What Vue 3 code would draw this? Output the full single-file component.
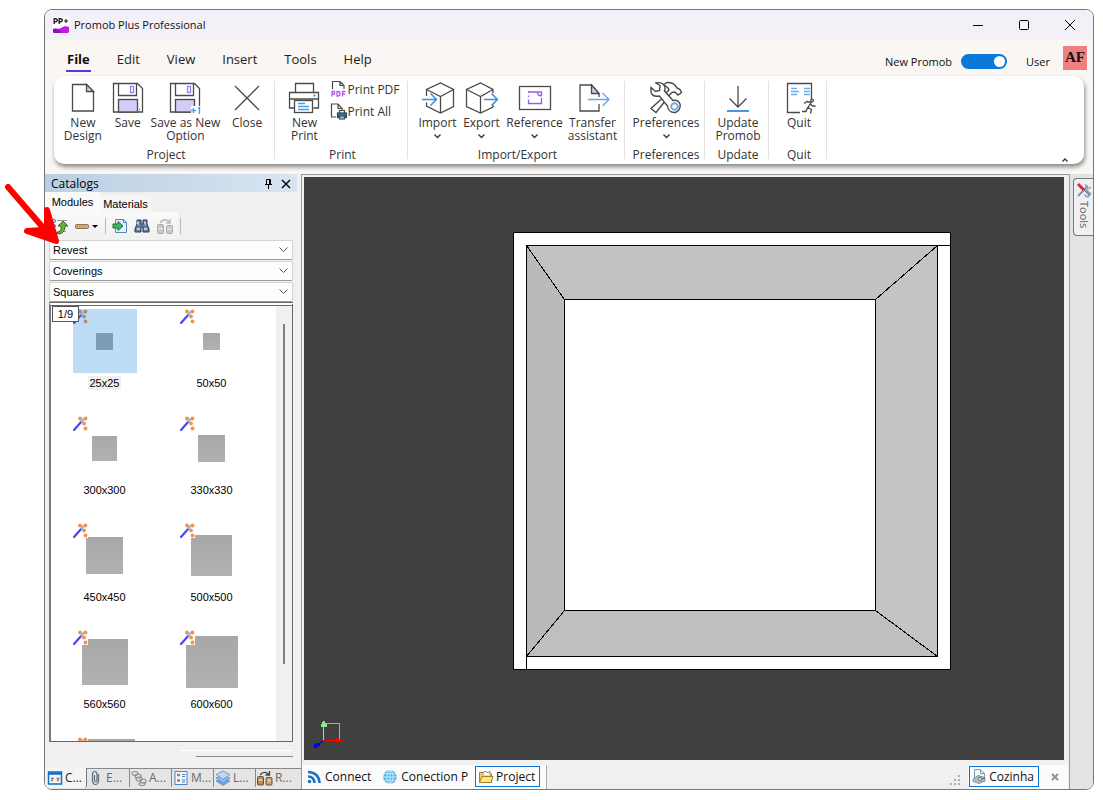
<script setup>
import { ref } from 'vue'

const menus = ['File', 'Edit', 'View', 'Insert', 'Tools', 'Help']
const activeMenu = ref('File')
const newPromob = ref(true)

const groups = [
  { name: 'Project', cls: 'g-project', items: [
    { icon: 'new', text: 'New Design', w: 'w44' },
    { icon: 'save', text: 'Save', w: 'w46' },
    { icon: 'saveas', text: 'Save as New Option', w: 'w70' },
    { icon: 'close', text: 'Close', w: 'w54' }
  ] },
  { name: 'Print', cls: 'g-print', items: [{ icon: 'print', text: 'New Print', w: 'w44' }], side: true },
  { name: 'Import/Export', cls: 'g-io', items: [
    { icon: 'import', text: 'Import', w: 'w44', drop: true },
    { icon: 'export', text: 'Export', w: 'w44', drop: true },
    { icon: 'reference', text: 'Reference', w: 'w62', drop: true },
    { icon: 'transfer', text: 'Transfer assistant', w: 'w54' }
  ] },
  { name: 'Preferences', cls: 'g-pref', items: [{ icon: 'prefs', text: 'Preferences', w: 'w70', drop: true }] },
  { name: 'Update', cls: 'g-update', items: [{ icon: 'update', text: 'Update Promob', w: 'w54' }] },
  { name: 'Quit', cls: 'g-quit', items: [{ icon: 'quit', text: 'Quit', w: 'w54' }] }
]

const combos = ['Revest', 'Coverings', 'Squares']
const modules = [
  { name: '25x25', size: 17 },
  { name: '50x50', size: 17 },
  { name: '300x300', size: 25 },
  { name: '330x330', size: 27 },
  { name: '450x450', size: 37 },
  { name: '500x500', size: 41 },
  { name: '560x560', size: 46 },
  { name: '600x600', size: 52 },
  { name: '', size: 61 }
]
const selected = ref('25x25')

const dockTabs = [
  { icon: 'catalog', text: 'C...' },
  { icon: 'clip', text: 'E...' },
  { icon: 'chain', text: 'A...' },
  { icon: 'list', text: 'M...' },
  { icon: 'layers', text: 'L...' },
  { icon: 'replace', text: 'R...' }
]
</script>

<template>
  <div class="desktop">
    <div class="window">
      <header class="titlebar">
        <svg class="logo" width="16" height="16" viewBox="0 0 16 16">
          <rect width="16" height="16" rx="1" fill="#fff" />
          <path d="M1.2 7V1.8h1.6a1.4 1.4 0 0 1 0 3H1.2M6.2 7V1.8h1.6a1.4 1.4 0 0 1 0 3H6.2" fill="none" stroke="#222" stroke-width="1.4" />
          <path d="M11 4h4M13 2v4" stroke="#222" stroke-width="1.2" />
          <path d="M0 12c3-2 5 1 8-1s5-2 8-1v4.500q0 1.500-1.500 1.500h-13q-1.500 0-1.500-1.500z" fill="#c21be8" />
          <path d="M0 12.500c3-1.500 5 1 8 1.500v2H1.500Q0 16 0 14.500z" fill="#8a0fb5" />
        </svg>
        <h1>Promob Plus Professional</h1>
        <button class="winbtn" aria-label="Minimize"><svg width="12" height="12"><path d="M1 6.500h10" stroke="#000" /></svg></button>
        <button class="winbtn" aria-label="Maximize"><svg width="12" height="12"><rect x="1.500" y="1.500" width="9" height="9" rx="1" fill="none" stroke="#000" /></svg></button>
        <button class="winbtn" aria-label="Close window"><svg width="12" height="12"><path d="M1 1l10 10M11 1L1 11" stroke="#000" /></svg></button>
      </header>

      <div class="menubar">
        <nav class="menus">
          <button v-for="m in menus" :key="m" :class="['menu', { on: m === activeMenu }]" @click="activeMenu = m">{{ m }}</button>
        </nav>
        <label class="switch">
          <span>New Promob</span>
          <input v-model="newPromob" type="checkbox" />
        </label>
        <span class="user">User</span>
        <span class="avatar">AF</span>
      </div>

      <section class="ribbon">
        <div v-for="g in groups" :key="g.name" :class="['group', g.cls]">
          <div class="tools">
            <button v-for="it in g.items" :key="it.icon" :class="['tool', it.w]">
              <svg class="ico" width="34" height="34" viewBox="0 0 34 34" fill="none" stroke="#4a4a4a" stroke-width="1.300">
                <g v-if="it.icon === 'new'">
                  <path d="M6.500 3.500h14l7 7v19.500h-21z" />
                  <path d="M20.500 3.500v7h7z" fill="#d5cbf7" />
                </g>
                <g v-else-if="it.icon === 'save' || it.icon === 'saveas'">
                  <path d="M2.500 2.500h24l5 5v23.500h-29z" />
                  <path d="M7.500 2.500v12h18v-12" />
                  <rect x="19.500" y="5.500" width="3" height="6" stroke="#9c7ef2" />
                  <rect x="7.500" y="18.500" width="19" height="12.500" fill="#d5cbf7" />
                  <path v-if="it.icon === 'save'" d="M28 28.500h1" stroke="#6a4be0" />
                  <g v-else stroke="#4a9bea">
                    <path d="M23 25h11v9H23z" fill="#fff" stroke="none" />
                    <path d="M23 29.500h5M25.500 27v5M30 27.500l1.500-1v6.500" />
                  </g>
                </g>
                <path v-else-if="it.icon === 'close'" d="M5 5l24 24M29 5L5 29" />
                <g v-else-if="it.icon === 'print'">
                  <path d="M8.500 12v-9.500h18V12M7.500 27H2.500V11.500h29V27h-5M2.500 18h29" />
                  <rect x="7.500" y="19.500" width="18" height="12" fill="#fff" />
                  <path d="M11 22.500h7M11 25.500h11M11 28.500h11" stroke="#4a9bea" />
                  <path d="M26.500 14.500h2" stroke="#16a7e8" stroke-width="2" />
                </g>
                <g v-else-if="it.icon === 'import'">
                  <path d="M5.500 15V8.500L19.500 2l13 6.500v17L19.500 32l-14-7v-3.500M5.500 8.500l14 7 13-7M19.500 15.500V32" />
                  <path d="M1 18.500h14M9.500 12.500l6 6-6 6" stroke="#3a8ee6" stroke-width="1.500" />
                </g>
                <g v-else-if="it.icon === 'export'">
                  <path d="M28 12V8.500L15.500 2l-14 6.500v17L15.500 32 28 26v-2M1.500 8.500l14 7 12.500-7M15.500 15.500V32" />
                  <path d="M19 18.500h13.500M26.500 12.500l6 6-6 6" stroke="#3a8ee6" stroke-width="1.500" />
                </g>
                <g v-else-if="it.icon === 'reference'">
                  <rect x="1.500" y="5.500" width="31" height="23" />
                  <path d="M10.500 12v-1h13v3l-2 .500M23.500 17v5.500h-13v-4M10.500 14.500v1.500M19.500 11q0 4 4 4" stroke="#8c62ec" />
                </g>
                <g v-else-if="it.icon === 'transfer'">
                  <path d="M23 12.500L15.500 4H4v26h19v-7M23 16v-3.500" />
                  <path d="M15.500 4v8.500H23z" fill="#d5cbf7" />
                  <path d="M12 18.500h21M26.500 12l6.500 6.500-6.500 6.500" stroke="#64a9ee" />
                </g>
                <g v-else-if="it.icon === 'prefs'" stroke-width="1.400">
                  <path d="M14 4l4-2.500q7-.500 10 5.500l3 1.500 1.500 3-3.500 2.500-3-3-3 .500-4 4-2.500-3 3.500-3.500q-1-3.500-6-5z" />
                  <path d="M17 19L7 31.500l-5-4L13.500 17" />
                  <path d="M2 6.500l4.500 4 4-1 .5-5L7 2q6-1.500 8.500 3 1 2.500 0 5l8.500 9.500q5-1 7 3.500 1 6-4.500 8.500-7 .5-8-6.500L10.500 15Q3.500 16.500 2 11z" fill="#fff" />
                  <circle cx="25.500" cy="25.500" r="3.300" stroke="#6daeea" stroke-width="2" />
                </g>
                <g v-else-if="it.icon === 'update'">
                  <path d="M17 5v21M8.500 17.500L17 26l8.500-8.500" />
                  <path d="M6 30h22" stroke="#4a95e8" stroke-width="1.800" />
                </g>
                <g v-else>
                  <path d="M18 31.500H5.500v-29h24V18" />
                  <path d="M9 7.500h6M9 10.500h8M9 13.500h6M22 7.500h6M22 10.500h6M22 13.500h6" stroke="#69aef2" />
                  <circle cx="30" cy="19.500" r="1.400" />
                  <path d="M22 22.500l3-2 4 1-3 5 3.500 2-1 4M25.500 26.500l-1.500 4h-4M28.500 23l2 2h3" />
                </g>
              </svg>
              <span class="cap">{{ it.text }}</span>
              <svg v-if="it.drop" class="chev" width="7" height="5"><path d="M.500 .500l3 3 3-3" fill="none" stroke="#333" stroke-width="1.300" /></svg>
            </button>
            <div v-if="g.side" class="side">
              <button class="mini">
                <svg width="17" height="18" viewBox="0 0 17 18" fill="none" stroke="#4a4a4a" stroke-width="1.200">
                  <path d="M2.500 9V1.500H10l4 4V9M10 1.500v4h4" />
                  <g stroke="#b35cf0" stroke-width="1.300"><path d="M2 16.500v-5h2.500v2.500H2M7 11.500v4.500h1q2 0 2-2.200T8 11.500zM12.500 16.500v-5h3M12.500 14h2.500" /></g>
                </svg>
                <span>Print PDF</span>
              </button>
              <button class="mini">
                <svg width="17" height="18" viewBox="0 0 17 18" fill="none" stroke="#4a4a4a" stroke-width="1.200">
                  <path d="M6 15H1.500V2H8l4 4.500V8M8 2v4.500h4" />
                  <rect x="9.500" y="8.500" width="5" height="3" fill="#fff" /><rect x="7.500" y="11" width="9" height="4.500" fill="#3f6fa5" stroke="#26435f" /><rect x="9.500" y="14" width="5" height="3" fill="#9ccbf2" />
                </svg>
                <span>Print All</span>
              </button>
            </div>
          </div>
          <div class="gname">{{ g.name }}</div>
        </div>
        <button class="collapse" aria-label="Collapse ribbon"><svg width="6" height="4"><path d="M.500 3.500l2.500-2.500 2.500 2.500" fill="none" stroke="#333" stroke-width="1.300" /></svg></button>
      </section>

      <main class="body">
        <aside class="dock">
          <div class="dockhead">
            <h2>Catalogs</h2>
            <button aria-label="Pin"><svg width="9" height="11" viewBox="0 0 9 11" fill="none" stroke="#000"><path d="M2.500 6.500v-5h4v5M1 6.500h7M4.500 6.500V11M5.500 1.500v5" /></svg></button>
            <button aria-label="Close panel"><svg width="10" height="10"><path d="M1 1l8 8M9 1L1 9" stroke="#000" stroke-width="1.400" /></svg></button>
          </div>
          <div class="tabs">
            <button class="tab on">Modules</button>
            <button class="tab">Materials</button>
          </div>
          <div class="toolbar">
            <button aria-label="Level up"><svg width="18" height="17" viewBox="0 0 18 17">
              <path d="M6 2.500h10M6 13.500h9" stroke="#999" /><g fill="#fff" stroke="#2f78b5"><circle cx="3" cy="3" r="1.500" /><circle cx="3" cy="8" r="1.500" /><circle cx="3" cy="13" r="1.500" /></g>
              <path d="M5 15q6-1 5-7H7l5-5 5 5h-3q0 7-6 8z" fill="#6fae3e" stroke="#2f6d1d" /></svg></button>
            <button aria-label="Remove"><svg width="24" height="12"><rect x=".500" y="4.500" width="13" height="4" rx="1" fill="#cda878" stroke="#8c7455" /><path d="M17 5h6l-3 3z" fill="#000" /></svg></button>
            <span class="sep"></span>
            <button aria-label="Import module"><svg width="16" height="16" viewBox="0 0 16 16"><path d="M3.500 1.500h8l3 3v10h-11z" fill="#e9f2fc" stroke="#5c87b8" /><path d="M11.500 1.500v3h3" fill="none" stroke="#5c87b8" /><path d="M1 6h5V3.500L11 8l-5 4.500V10H1z" fill="#3fb86a" stroke="#15703a" /></svg></button>
            <button aria-label="Search"><svg width="16" height="16" viewBox="0 0 16 16"><path d="M3 2h4v4h2V2h4v4l2 5v3H9V9H7v5H1v-3l2-5z" fill="#64809e" stroke="#24384f" /><path d="M3 11h3M10 11h3M4 3.500v3M11 3.500v3" stroke="#d9e8f7" stroke-width="1.500" /></svg></button>
            <button aria-label="Replace" disabled><svg width="18" height="17" viewBox="0 0 18 17" fill="#c9c9c9" stroke="#aaa"><rect x="1.500" y="6.500" width="6" height="9" rx="1" /><rect x="10.500" y="7.500" width="6" height="8" rx="1" /><path d="M4 5q3-5 8-2l2 2M14 1v4h-4" fill="none" stroke="#bbb" stroke-width="1.500" /><path d="M2 10.500h5M11 11h5" stroke="#eee" /></svg></button>
            <span class="sep"></span>
          </div>
          <div class="combos">
            <label v-for="c in combos" :key="c" class="combo">
              <select :aria-label="c"><option>{{ c }}</option></select>
              <svg width="9" height="6"><path d="M.500 .500l4 4 4-4" fill="none" stroke="#555" /></svg>
            </label>
          </div>
          <div class="listbox">
            <div class="grid">
              <button v-for="m in modules" :key="m.size + m.name" :class="['cell', { sel: m.name === selected }]" @click="selected = m.name">
                <span class="thumb">
                  <span class="square" :style="{ width: m.size + 'px', height: m.size + 'px' }"></span>
                  <svg class="wand" width="15" height="15" viewBox="0 0 15 15">
                    <rect class="wandbg" width="15" height="15" />
                    <path d="M1 14L9 5" stroke="#4a48f2" stroke-width="2.200" stroke-linecap="round" /><path d="M8 6l3-3.500" stroke="#7cc4f5" stroke-width="2.400" />
                    <g fill="#f8904c"><circle cx="7" cy="2.500" r="1.900" /><circle cx="12.500" cy="2.500" r="1.900" /><circle cx="11" cy="7.500" r="1.900" /><circle cx="12.500" cy="12.500" r="1.900" /></g>
                  </svg>
                </span>
                <span class="name">{{ m.name }}</span>
              </button>
            </div>
            <div class="scroll"><span></span></div>
            <span class="page">1/9</span>
          </div>
          <div class="underlist"><span class="light"></span><span class="dark"></span></div>
          <div class="docktabs">
            <button v-for="(t, i) in dockTabs" :key="t.icon" :class="['dtab', { on: i === 0 }]">
              <svg width="16" height="16" viewBox="0 0 16 16" fill="none">
                <g v-if="t.icon === 'catalog'"><rect x="1.500" y="2" width="13" height="12" fill="#f4f8fd" stroke="#0f70cf" stroke-width="1.500" /><path d="M1 3.500h14" stroke="#0f70cf" stroke-width="2.500" /><path d="M4 8.500h3M9.500 8.500h3M4 10.500h2M10 10.500h2" stroke="#8a7a55" stroke-width="1.500" /></g>
                <path v-else-if="t.icon === 'clip'" d="M10.500 4v7q-.500 3.500-3 3.500t-3-3.500V4q.300-2.500 2.200-2.500T9 4v6.500q-.300 1.500-1.300 1.500T6.500 10.500V5" stroke="#5d6c7c" stroke-width="1.200" />
                <g v-else-if="t.icon === 'chain'" stroke="#8d8d98" stroke-width="1.200"><ellipse cx="4" cy="3.500" rx="3" ry="2" /><ellipse cx="7" cy="6" rx="3" ry="2" /><ellipse cx="8" cy="9" rx="3" ry="2" /><ellipse cx="12" cy="11" rx="3" ry="2" /><ellipse cx="11" cy="14" rx="3" ry="1.500" /></g>
                <g v-else-if="t.icon === 'list'"><rect x="2" y="1.500" width="12" height="13" fill="#f2f7fd" stroke="#4b86c5" /><path d="M4 5h3M4 10.500h3" stroke="#a8834a" stroke-width="2.500" /><path d="M9 4.500h3.500M9 6.500h3M9 10h3.500M9 12h3" stroke="#4b86c5" /></g>
                <g v-else-if="t.icon === 'layers'" stroke="#5f8fbf" stroke-width=".800"><path d="M1 11l7-3 7 3-7 4.500z" fill="#6fa7dc" /><path d="M1 8l7-3 7 3-7 5z" fill="#8ebce8" /><path d="M1 4.500l7-3.500 7 3.500-7 5z" fill="#b8d8f5" /></g>
                <g v-else><rect x=".500" y="6.500" width="6" height="8.500" rx="1" fill="#b78a55" stroke="#6f5030" /><rect x="9" y="7.500" width="6" height="7.500" rx="1" fill="#cfa470" stroke="#6f5030" /><path d="M3 5q3-4 7-2l2 1.500M12.500 1v4h-4" stroke="#444" stroke-width="1.300" /><path d="M2 10h3M10.500 10.500h3" stroke="#f5e3c8" stroke-width="1.500" /></g>
              </svg>
              <span>{{ t.text }}</span>
            </button>
          </div>
        </aside>

        <section class="view">
          <div class="canvas">
            <svg viewBox="0 0 760 583" role="img" aria-label="Room seen from above">
              <g stroke="#000" shape-rendering="crispEdges">
                <rect x="209.500" y="55.500" width="437" height="437" fill="#fff" />
                <path d="M222.500 68.500h411l-62 54h-311z" fill="#c2c2c2" />
                <path d="M222.500 68.500v411l38-46v-311z" fill="#bababa" />
                <path d="M633.500 68.500v411l-62-46v-311z" fill="#c4c4c4" />
                <path d="M222.500 479.500h411l-62-46h-311z" fill="#bfbfbf" />
                <rect x="260.500" y="122.500" width="311" height="311" fill="#fff" />
                <path d="M633.500 68.500h13M222.500 479.500v13" />
              </g>
              <g fill="none" shape-rendering="crispEdges">
                <path d="M20 546.500h15.500v16" stroke="#aaa" /><path d="M19.500 563v-16" stroke="#8fe88f" />
                <path d="M19.500 563.500h14" stroke="#f00" /><path d="M19 564l-6 4" stroke="#00f" />
                <path d="M17 548l3-5 3 5v2h-6z" fill="#8fe88f" /><path d="M32 561l7 2.500-7 2.500z" fill="#f00" /><path d="M10 567l5-1.500 1 3-4 2.500h-2z" fill="#00f" />
              </g>
            </svg>
          </div>
          <footer class="statusbar">
            <div class="pages">
              <button class="ptab">
                <svg width="14" height="14" viewBox="0 0 14 14" fill="none" stroke="#1c74c6" stroke-width="2.600"><circle cx="2.500" cy="11.500" r="1.800" fill="#1c74c6" stroke="none" /><path d="M1 6.500q6 0 6.500 6.500M1 2q11 .500 11.500 11" /></svg>
                <span>Connect</span>
              </button>
              <button class="ptab">
                <svg width="14" height="14" viewBox="0 0 14 14" fill="none" stroke="#d9f1fc" stroke-width=".900"><circle cx="7" cy="7" r="6.800" fill="#4db5e6" stroke="none" /><ellipse cx="7" cy="7" rx="3.200" ry="6.500" /><path d="M7 0v14M0 7h14M1 3.800h12M1 10.200h12" /></svg>
                <span>Conection P</span>
              </button>
              <button class="ptab on">
                <svg width="16" height="14" viewBox="0 0 16 14" stroke="#a8821e"><path d="M1.500 12.500V2.500h4l1 1.500h7v8.500z" fill="#f0cf5e" /><path d="M5 5V2.500l2-1 3 1 2-1v4" fill="#fff" stroke="#888" /><path d="M1.500 12.500l2.500-6h11l-2 6z" fill="#fbe68f" /></svg>
                <span>Project</span>
              </button>
            </div>
            <svg class="grip" width="12" height="12" fill="#aaa"><path d="M8 0h2v2H8zM4 4h2v2H4zM8 4h2v2H8zM0 8h2v2H0zM4 8h2v2H4zM8 8h2v2H8z" /></svg>
            <div class="rooms">
              <button class="ptab on">
                <svg width="15" height="15" viewBox="0 0 15 15" fill="none"><path d="M2.500 .500h6l4 4v8h-10z" fill="#edf4fc" stroke="#7a9cc4" /><path d="M8.500 .500v4h4" stroke="#7a9cc4" /><path d="M1 10l5-3.500 7 2v3.500l-6 2.500-6-2z" fill="#b3bac4" stroke="#7b8490" stroke-width=".800" /><circle cx="8" cy="10" r="1.800" fill="#e2d4a4" stroke="#666" stroke-width=".800" /><path d="M13 9l-3 1" stroke="#3570bb" /></svg>
                <span>Cozinha</span>
              </button>
              <button class="xbtn" aria-label="Close room"><svg width="8" height="8"><path d="M1 1l6 6M7 1L1 7" stroke="#909090" stroke-width="2" /></svg></button>
            </div>
          </footer>
        </section>

        <aside class="rail">
          <button class="railtab">
            <svg width="16" height="16" viewBox="0 0 16 16" fill="none"><path d="M2 14L12 4M12 14l2-2-4-4" stroke="#7e93b5" stroke-width="2" /><path d="M10 2q-1 4 2 5l3-2M9 12q0 3 3 3l3-4" stroke="#8fa5c6" stroke-width="1.500" /><path d="M2 2l6 6" stroke="#d02d36" stroke-width="3" /><path d="M8 8l5 5" stroke="#666" /></svg>
            <span>Tools</span>
          </button>
        </aside>
      </main>
    </div>

    <svg class="pointer" width="64" height="66" viewBox="0 0 64 66" aria-hidden="true">
      <path d="M8 6l38 44" stroke="#fe0000" stroke-width="6" stroke-linecap="round" />
      <path d="M47 29l9 31-29-10 16-1 4-4z" fill="#fe0000" stroke="#fe0000" stroke-width="6" stroke-linejoin="round" />
    </svg>
  </div>
</template>

<style>
body { background: #fff; }
</style>

<style scoped>
* { box-sizing: border-box; }
.desktop { position: relative; height: 100vh; padding: 9px 9px 10px 44px; font: 12px/16px "Open Sans", "Noto Sans", sans-serif; color: #222; }
button { font: inherit; color: inherit; background: none; border: 0; padding: 0; margin: 0; }
svg { display: block; flex: none; }
h1, h2 { margin: 0; font: inherit; }

.window { display: flex; flex-direction: column; height: 100%; border: 1px solid #777; border-radius: 8px; overflow: hidden; background: #f9f6f3; }
.titlebar { display: flex; align-items: center; height: 30px; padding-left: 8px; background: #f3f0f8; flex: none; }
.titlebar h1 { flex: 1; padding-left: 5px; color: #111; font-size: 11px; }
.winbtn { display: flex; align-items: center; justify-content: center; width: 46px; height: 30px; }

.menubar { display: flex; align-items: center; height: 36px; padding: 0 6px 0 21px; flex: none; }
.menus { display: flex; flex: 1; gap: 25px; font-size: 13px; padding-top: 4px; }
.menu { height: 24px; padding: 0 1px; border-bottom: 2px solid transparent; line-height: 22px; }
.menu.on { font-weight: 700; border-color: #5b35dc; color: #111; }
.switch { display: flex; align-items: center; gap: 9px; color: #111; padding-top: 7px; font-size: 11px; }
.switch input { appearance: none; width: 46px; height: 15px; margin: 0; border-radius: 8px; background: #0a79d8; display: flex; align-items: center; justify-content: flex-end; padding: 2px; }
.switch input::after { content: ""; width: 11px; height: 11px; border-radius: 50%; background: #fff; }
.switch input:not(:checked) { background: #999; justify-content: flex-start; }
.user { padding: 8px 13px 0 19px; color: #111; font-size: 11px; }
.avatar { width: 24px; height: 24px; background: #f08080; font: bold 15px/23px "Liberation Serif", serif; text-align: center; color: #111; }

.ribbon { position: relative; display: flex; flex: none; height: 88px; margin: 0 9px 10px; padding: 5px 0 5px 1px; border-radius: 10px; background: #fff; box-shadow: 1px 3px 4px #8b8b8b; font-size: 12px; line-height: 13px; color: #333; }
.group { display: flex; flex-direction: column; justify-content: space-between; border-right: 1px solid #e9dfd9; }
.tools { display: flex; justify-content: center; align-items: flex-start; padding-left: 3px; }
.g-project { width: 220px; }
.g-project .tools { padding-left: 6px; }
.g-print { width: 133px; }
.g-print .tools { padding-left: 0; }
.g-io { width: 217px; }
.g-pref { width: 80px; }
.g-update { width: 64px; }
.g-quit { width: 58px; }
.tool { display: flex; flex-direction: column; align-items: center; margin: 0; }
.w44 { width: 44px; }
.w46 { width: 46px; }
.w54 { width: 54px; }
.w62 { width: 62px; }
.w70 { width: 70px; }
.ico { margin-bottom: 1px; }
.chev { margin-top: 5px; }
.gname { text-align: center; line-height: 14px; margin-bottom: -3px; padding-left: 3px; white-space: nowrap; }
.side { display: flex; flex-direction: column; gap: 4px; padding-left: 4px; margin-top: -1px; }
.mini { display: flex; align-items: center; white-space: nowrap; }
.collapse { position: absolute; right: 16px; bottom: 2px; }

.body { display: flex; flex: 1; min-height: 0; background: #f0f0f0; }
.dock { display: flex; flex-direction: column; width: 257px; flex: none; border-right: 1px solid #999; font: 11px/16px "Liberation Sans", sans-serif; color: #000; }
.dockhead { display: flex; align-items: center; gap: 8px; height: 18px; padding: 1px 6px 0 6px; margin-right: 4px; background: linear-gradient(90deg, #bbcfe3, #d8e4f2); font: 12px/18px "Open Sans", sans-serif; flex: none; }
.dockhead h2 { flex: 1; }
.tabs { display: flex; align-items: flex-end; height: 20px; flex: none; }
.tab { height: 17px; width: 51px; background: #f6f6f6; text-align: center; }
.tab.on { height: 20px; width: 55px; background: #fafafa; }
.toolbar { display: flex; align-items: center; gap: 6px; width: 133px; height: 28px; padding-left: 6px; flex: none; background: linear-gradient(#fafafa, #f0f0f0); }
.sep { width: 1px; height: 16px; background: #b8b8b8; flex: none; }
.combos { display: flex; flex-direction: column; gap: 1px; margin: 0 8px 0 4px; flex: none; }
.combo { display: flex; align-items: center; height: 20px; border: 1px solid #d3d3d3; border-bottom-color: #9b9b9b; border-radius: 2px; background: #fdfdfd; padding-right: 4px; }
.combo select { appearance: none; flex: 1; border: 0; background: none; font: inherit; color: inherit; padding: 0 0 0 3px; margin: 0; outline: none; }
.listbox { position: relative; display: flex; flex: 1; min-height: 0; margin: 0 8px 0 4px; border: 1px solid #666; border-top: 4px double #666; border-left: 2px solid #77757f; background: #fff; overflow: hidden; }
.grid { flex: 1; display: grid; grid-template-columns: repeat(auto-fill, 107px); grid-auto-rows: 107px; padding-top: 3px; }
.cell { display: flex; flex-direction: column; align-items: center; gap: 3px; }
.thumb { position: relative; display: flex; align-items: center; justify-content: center; width: 64px; height: 64px; }
.square { background: linear-gradient(#a8a8a8, #b1b1b1); }
.wand { position: absolute; left: 0; top: 0; }
.wandbg { fill: #fff; }
.sel .thumb { background: #bedcf5; }
.sel .square { background: #7e9cb5; }
.sel .wandbg { fill: #bedcf5; }
.sel .wand g { fill: #b08a7c; }
.name { padding: 0 2px; line-height: 14px; }
.sel .name { background: #efefef; }
.scroll { width: 16px; background: #f0f0f0; padding: 18px 7px 77px 7px; display: flex; flex: none; }
.scroll span { flex: 1; background: #808080; }
.page { position: absolute; left: 1px; top: 0; width: 27px; height: 16px; border: 1px solid #555; background: #fff; text-align: center; line-height: 14px; }
.underlist { display: flex; flex-direction: column; align-items: flex-end; gap: 5px; height: 26px; padding: 8px 8px 0 0; flex: none; }
.light { width: 114px; height: 1px; background: #fff; }
.dark { width: 97px; height: 1px; background: #888; }
.docktabs { display: flex; height: 21px; background: #e5e5e5; border-top: 1px solid #888; flex: none; font: 12px/18px "Open Sans", sans-serif; color: #6a6a6a; }
.dtab { display: flex; align-items: center; gap: 2px; width: 42px; padding-left: 1px; height: 18px; border-left: 1px solid #888; }
.dtab.on { height: 20px; margin-top: -1px; padding-left: 2px; background: #f4f4f4; border: 0; border-right: 1px solid #777; border-radius: 0 0 3px 3px; color: #222; }
.dtab.on + .dtab { border: 0; }

.view { display: flex; flex-direction: column; flex: 1; min-width: 0; padding: 2px 5px 0 2px; border-top: 1px solid #999; border-right: 1px solid #999; }
.canvas { flex: 1; min-height: 0; background: #404040; }
.canvas svg { width: 100%; height: 100%; }
.statusbar { display: flex; align-items: center; flex: none; height: 29px; padding-top: 4px; margin: 0 -4px 0 -2px; color: #111; }
.pages { display: flex; align-items: center; gap: 2px; height: 24px; padding: 0 6px 0 0; background: #fbfbfb; border-right: 1px solid #aaa; }
.ptab { display: flex; align-items: center; gap: 4px; height: 21px; padding: 0 4px; border: 1px solid transparent; white-space: nowrap; }
.ptab.on { border-color: #0a74d4; background: #fdfdfd; padding: 0 4px 0 2px; gap: 2px; }
.grip { margin-left: auto; margin-right: 6px; margin-top: 8px; }
.rooms { display: flex; align-items: center; gap: 12px; height: 24px; padding: 0 9px 0 1px; background: #fbfbfb; }
.rail { width: 23px; flex: none; background: #e3e3e3; padding: 4px 0 0 3px; }
.railtab { display: flex; flex-direction: column; align-items: center; gap: 3px; width: 20px; height: 58px; padding: 3px 0; background: #f0f0f0; border: 1px solid #777; border-right: 0; border-radius: 4px 0 0 4px; color: #666; line-height: 14px; }
.railtab span { writing-mode: vertical-rl; font-size: 11px; }
.pointer { position: absolute; left: 0; top: 181px; }
</style>
